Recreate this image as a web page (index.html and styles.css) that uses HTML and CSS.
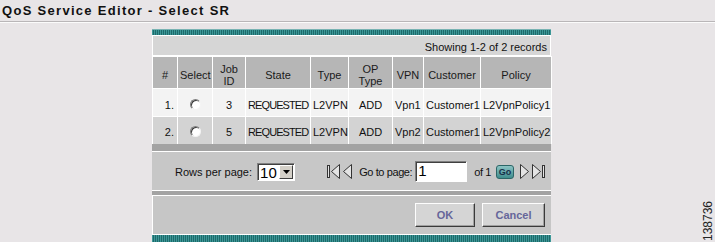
FILE: index.html
```html
<!DOCTYPE html>
<html>
<head>
<meta charset="utf-8">
<title>QoS Service Editor - Select SR</title>
<link rel="stylesheet" href="styles.css">
</head>
<body>
<h1 class="title">QoS Service Editor - Select SR</h1>
<div class="stage">
  <section class="panel">
    <div class="teal"></div>
    <div class="showing">Showing 1-2 of 2 records</div>
    <table class="grid">
      <colgroup>
        <col class="w-num"><col class="w-sel"><col class="w-job"><col class="w-state"><col class="w-type"><col class="w-op"><col class="w-vpn"><col class="w-cust"><col class="w-pol">
      </colgroup>
      <thead>
        <tr><th>#</th><th>Select</th><th>Job<br>ID</th><th>State</th><th>Type</th><th>OP<br>Type</th><th>VPN</th><th>Customer</th><th>Policy</th></tr>
      </thead>
      <tbody>
        <tr class="odd"><td class="r">1.</td><td class="c"><span class="radio"></span></td><td class="c">3</td><td class="caps">REQUESTED</td><td>L2VPN</td><td class="c">ADD</td><td>Vpn1</td><td>Customer1</td><td>L2VpnPolicy1</td></tr>
        <tr class="even"><td class="r">2.</td><td class="c"><span class="radio"></span></td><td class="c">5</td><td class="caps">REQUESTED</td><td>L2VPN</td><td class="c">ADD</td><td>Vpn2</td><td>Customer1</td><td>L2VpnPolicy2</td></tr>
      </tbody>
    </table>
    <div class="sep sep-top"></div>
    <div class="pager">
      <div class="rows">
        <span>Rows per page:</span>
        <span class="select"><span class="val">10</span><span class="drop"><svg width="7" height="4" viewBox="0 0 7 4"><polygon points="0,0 7,0 3.5,4" fill="#000"/></svg></span></span>
      </div>
      <div class="nav">
        <svg class="ico first" width="13" height="15" viewBox="0 0 13 15"><rect x="0.5" y="1.5" width="2" height="12" fill="#e4e4e4" stroke="#333"/><polygon points="12.5,0.5 4.5,7.5 12.5,14.5" fill="#e4e4e4" stroke="#333"/></svg>
        <svg class="ico prev" width="9" height="15" viewBox="0 0 9 15"><polygon points="8.5,0.5 0.5,7.5 8.5,14.5" fill="#e4e4e4" stroke="#333"/></svg>
        <span class="goto">Go to page:</span>
        <span class="input">1</span>
        <span class="of">of 1</span>
        <span class="go">Go</span>
        <svg class="ico next" width="9" height="15" viewBox="0 0 9 15"><polygon points="0.5,0.5 8.5,7.5 0.5,14.5" fill="#e4e4e4" stroke="#333"/></svg>
        <svg class="ico last" width="13" height="15" viewBox="0 0 13 15"><polygon points="0.5,0.5 8.5,7.5 0.5,14.5" fill="#e4e4e4" stroke="#333"/><rect x="10.5" y="1.5" width="2" height="12" fill="#e4e4e4" stroke="#333"/></svg>
      </div>
    </div>
    <div class="sep sep-bottom"></div>
    <div class="actions">
      <button class="btn ok">OK</button>
      <button class="btn cancel">Cancel</button>
    </div>
    <div class="teal teal-bottom"></div>
  </section>
  <div class="figid">138736</div>
</div>
</body>
</html>
```
FILE: styles.css
```css
* { box-sizing: border-box; }
html, body { margin: 0; padding: 0; }
body {
  width: 715px;
  height: 242px;
  overflow: hidden;
  background: #e8e5e7;
  font-family: "Liberation Sans", Arial, sans-serif;
  font-size: 11px;
  color: #111;
}
.title {
  margin: 0;
  height: 22px;
  padding: 3px 0 0 2px;
  font-size: 13px;
  line-height: 15px;
  font-weight: bold;
  letter-spacing: 1.3px;
  color: #111;
  border-bottom: 1px solid #b9b6b8;
  box-shadow: 0 1px 0 #fbfbfb;
}
.stage {
  display: grid;
  grid-template-columns: 152px 399px 1fr;
  padding-top: 7px;
}
.panel {
  grid-column: 2;
  width: 399px;
  display: flex;
  flex-direction: column;
}
.teal {
  height: 7px;
  border-top: 1px solid #79b3b3;
  border-bottom: 1px solid #fff;
  background: repeating-linear-gradient(90deg, #3c9797 0 1px, #1d6a6b 1px 2px);
}
.teal-bottom {
  height: 8px;
  border-bottom: 0;
  border-top: 1px solid #fff;
}
.showing {
  height: 20px;
  padding: 5px 3px 0 0;
  line-height: 13px;
  text-align: right;
  background: #d6d6d6;
  border-bottom: 1px solid #fff;
  border-left: 1px solid #fff;
  border-right: 1px solid #fff;
}
.grid {
  width: 399px;
  table-layout: fixed;
  border-collapse: collapse;
}
.w-num { width: 25px; }
.w-sel { width: 35px; }
.w-job { width: 33px; }
.w-state { width: 65px; }
.w-type { width: 38px; }
.w-op { width: 44px; }
.w-vpn { width: 31px; }
.w-cust { width: 57px; }
.w-pol { width: 71px; }
.grid th, .grid td {
  border: 1px solid #fff;
  padding: 0 2px;
  white-space: nowrap;
  overflow: visible;
}
.grid th {
  height: 32px;
  background: #b6b6b6;
  font-weight: normal;
  line-height: 12px;
  padding-top: 4px;
  text-align: center;
  color: #1a1a1a;
}
.grid td {
  height: 28px;
  line-height: 13px;
  padding-top: 5px;
  vertical-align: middle;
}
.grid tr.odd td { background: #f3f3f3; }
.grid tr.even td { background: #d3d3d3; }
.grid tr.even td { height: 27px; border-bottom: 0; }
.grid td.c { text-align: center; }
.grid td.r { text-align: right; padding-right: 3px; }
.grid td.caps { letter-spacing: -0.9px; padding-left: 2px; }
.radio {
  display: inline-block;
  width: 11px;
  height: 11px;
  border-radius: 50%;
  border: 1px solid;
  border-color: #7d7d7d #f4f4f4 #f4f4f4 #7d7d7d;
  box-shadow: inset 1px 1px 0 #3c3c3c;
  background: #fff;
  vertical-align: -1px;
}
.sep {
  background: #a3a3a3;
  border-bottom: 1px solid #fff;
}
.sep-top { height: 8px; }
.sep-bottom { height: 6px; border-top: 1px solid #fff; }
.pager {
  height: 38px;
  background: #c7c7c7;
  display: flex;
  align-items: center;
  justify-content: space-between;
  padding: 2px 6px 0 23px;
}
.rows {
  display: flex;
  align-items: center;
  gap: 5px;
}
.select {
  display: inline-flex;
  align-items: stretch;
  width: 38px;
  height: 18px;
  border: 1px solid;
  border-color: #808080 #fff #fff #808080;
  box-shadow: inset 1px 1px 0 #404040;
  background: #fff;
  padding: 1px 1px 1px 2px;
}
.select .val {
  flex: 1;
  font-size: 15px;
  line-height: 15px;
  color: #000;
}
.select .drop {
  width: 14px;
  display: flex;
  align-items: center;
  justify-content: center;
  background: #d4d0c8;
  border: 1px solid;
  border-color: #fff #404040 #404040 #fff;
}
.nav {
  display: flex;
  align-items: center;
  letter-spacing: -0.4px;
}
.ico { display: block; }
.prev { margin-left: 3px; }
.goto { margin-left: 7px; }
.input {
  margin-left: 3px;
  width: 52px;
  height: 21px;
  background: #fff;
  border: 1px solid;
  border-color: #808080 #fff #fff #808080;
  box-shadow: inset 1px 1px 0 #404040;
  font-size: 15px;
  line-height: 18px;
  padding-left: 2px;
  color: #000;
  letter-spacing: 0;
}
.of { margin-left: 7px; }
.go {
  margin-left: 5px;
  width: 18px;
  height: 14px;
  border-radius: 3px;
  background: linear-gradient(#8cc4c4, #3f8c8d);
  border: 1px solid #2c6667;
  font-size: 9px;
  font-weight: bold;
  line-height: 12px;
  letter-spacing: 0;
  text-align: center;
  color: #17304a;
}
.next { margin-left: 6px; }
.last { margin-left: 3px; }
.actions {
  height: 38px;
  background: #c6c6c6;
  display: flex;
  align-items: center;
  justify-content: flex-end;
  gap: 7px;
  padding: 0 6px 0 0;
  border-left: 1px solid #fff;
}
.btn {
  height: 24px;
  padding: 0;
  font-family: "Liberation Sans", Arial, sans-serif;
  font-size: 11px;
  font-weight: bold;
  color: #66669a;
  background: #d5d5d5;
  border: 1px solid;
  border-color: #fdfdfd #3a3a3a #3a3a3a #fdfdfd;
  box-shadow: inset -1px -1px 0 #a0a0a0;
}
.ok { width: 60px; }
.cancel { width: 63px; }
.figid {
  grid-column: 3;
  justify-self: end;
  align-self: end;
  margin: 0 1px 0 0;
  writing-mode: vertical-rl;
  transform: rotate(180deg);
  font-size: 12px;
  line-height: 11px;
  color: #222;
}
```
